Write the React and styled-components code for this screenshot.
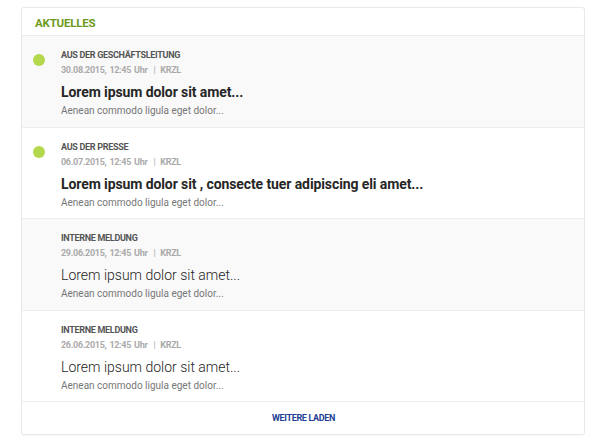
import React from "react";
import styled, { createGlobalStyle } from "styled-components";

const Global = createGlobalStyle`
  html, body { margin: 0; padding: 0; background: #ffffff; }
  body { font-family: Roboto, "Noto Sans", Arial, sans-serif; }
`;

const Page = styled.div`
  padding: 7px 9px 12px 21px;
`;

const Card = styled.section`
  width: 562px;
  border: 1px solid #e9e9e9;
  border-radius: 3px;
  background: #fff;
  box-shadow: 0 1px 1px rgba(0,0,0,0.03);
  overflow: hidden;
`;

const Header = styled.header`
  height: 27px;
  display: flex;
  align-items: center;
  padding-left: 13px;
  border-bottom: 1px solid #ececec;
`;

const HeaderTitle = styled.h2`
  margin: 0;
  padding-top: 3px;
  font-size: 11.5px;
  font-weight: 700;
  color: #6c9a1d;
  letter-spacing: -0.2px;
`;

const Row = styled.article`
  display: grid;
  grid-template-columns: 39px 1fr;
  padding: 14px 0 9px;
  height: 67.5px;
  background: ${(p) => (p.$shade ? "#f9f9f9" : "#ffffff")};
  border-bottom: 1px solid #ededed;
`;

const DotCol = styled.div`
  display: flex;
  justify-content: flex-start;
  padding-left: 11px;
`;

const Dot = styled.span`
  display: block;
  width: 12px;
  height: 12px;
  margin-top: 4px;
  border-radius: 50%;
  background: #b4d84b;
`;

const Body = styled.div`
  display: flex;
  flex-direction: column;
`;

const Category = styled.div`
  font-size: 9px;
  line-height: 11px;
  font-weight: 700;
  color: #555;
  letter-spacing: -0.3px;
  text-transform: uppercase;
`;

const Meta = styled.div`
  margin-top: 4px;
  font-size: 9px;
  line-height: 11px;
  font-weight: 700;
  color: #aaaaaa;
  letter-spacing: -0.3px;
  word-spacing: 1px;
`;

const Sep = styled.span`
  margin: 0 5px 0 6px;
  font-weight: 400;
`;

const Title = styled.h3`
  margin: 7px 0 0;
  font-size: 14px;
  line-height: 18px;
  font-weight: ${(p) => (p.$unread ? 700 : 300)};
  color: ${(p) => (p.$unread ? "#262626" : "#1e1e1e")};
  letter-spacing: ${(p) => (p.$unread ? "-0.1px" : "0")};
`;

const Teaser = styled.p`
  margin: 4px 0 0;
  font-size: 10px;
  line-height: 12px;
  color: #777;
`;

const Footer = styled.footer`
  height: 32px;
  display: flex;
  align-items: center;
  justify-content: center;
`;

const More = styled.button`
  border: 0;
  background: none;
  padding: 0;
  margin-left: 1px;
  font-family: inherit;
  font-size: 9px;
  font-weight: 700;
  letter-spacing: -0.35px;
  color: #1d3f96;
  cursor: pointer;
`;

const items = [
  {
    cat: "Aus der Geschäftsleitung",
    date: "30.08.2015, 12:45 Uhr",
    title: "Lorem ipsum dolor sit amet...",
    unread: true,
  },
  {
    cat: "Aus der Presse",
    date: "06.07.2015, 12:45 Uhr",
    title: "Lorem ipsum dolor sit , consecte tuer adipiscing eli amet...",
    unread: true,
  },
  {
    cat: "Interne Meldung",
    date: "29.06.2015, 12:45 Uhr",
    title: "Lorem ipsum dolor sit amet...",
    unread: false,
  },
  {
    cat: "Interne Meldung",
    date: "26.06.2015, 12:45 Uhr",
    title: "Lorem ipsum dolor sit amet...",
    unread: false,
  },
];

export default function App() {
  return (
    <>
      <Global />
      <Page>
        <Card>
          <Header>
            <HeaderTitle>AKTUELLES</HeaderTitle>
          </Header>
          {items.map((it, i) => (
            <Row key={i} $shade={i % 2 === 0}>
              <DotCol>{it.unread && <Dot />}</DotCol>
              <Body>
                <Category>{it.cat}</Category>
                <Meta>
                  {it.date}
                  <Sep>|</Sep>KRZL
                </Meta>
                <Title $unread={it.unread}>{it.title}</Title>
                <Teaser>Aenean commodo ligula eget dolor...</Teaser>
              </Body>
            </Row>
          ))}
          <Footer>
            <More>WEITERE LADEN</More>
          </Footer>
        </Card>
      </Page>
    </>
  );
}
